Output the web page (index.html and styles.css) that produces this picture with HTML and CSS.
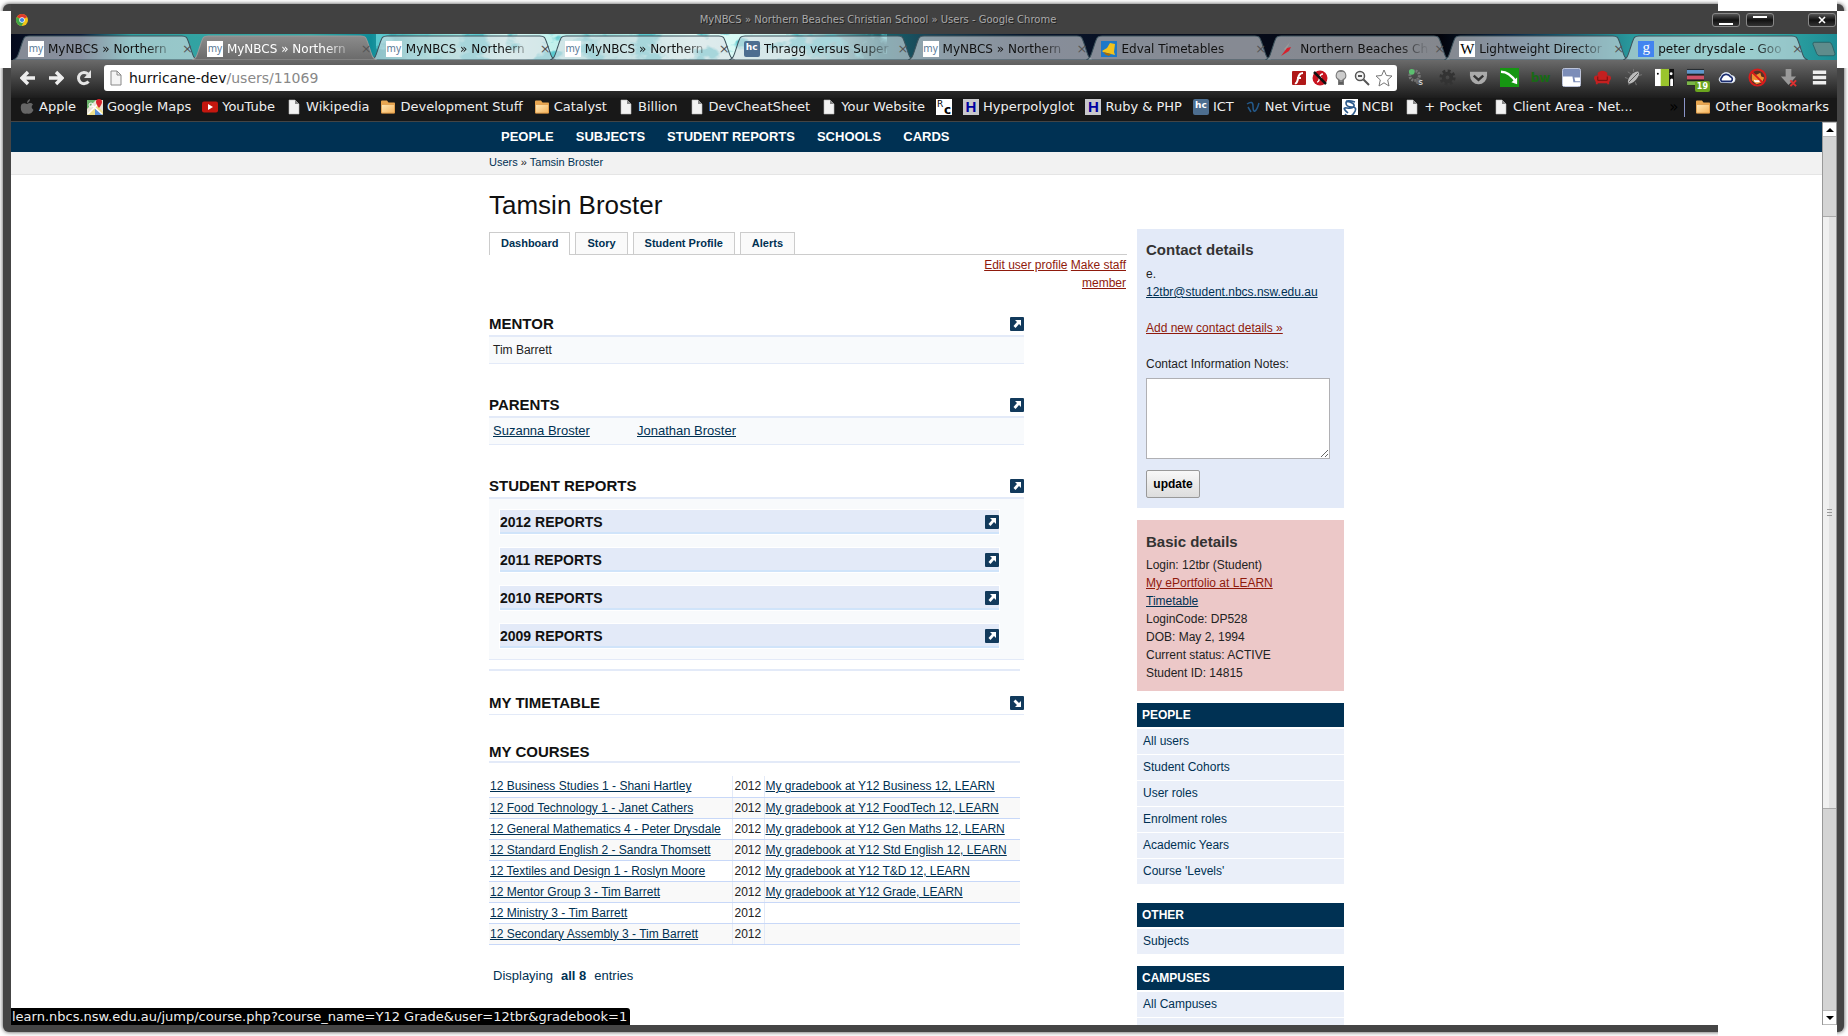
FILE: index.html
```html
<!DOCTYPE html>
<html lang="en">
<head>
<meta charset="utf-8">
<title>MyNBCS » Northern Beaches Christian School » Users</title>
<link rel="stylesheet" href="styles.css">
</head>
<body>
<svg class="defs" aria-hidden="true">
  <defs>
    <linearGradient id="folderFill" x1="0" y1="0" x2="1" y2="1"><stop offset="0" stop-color="#ffe9b8"/><stop offset="1" stop-color="#f5b35c"/></linearGradient>
    <linearGradient id="activeFill" x1="0" y1="0" x2="0" y2="1"><stop offset="0" stop-color="#8c8c8c"/><stop offset="1" stop-color="#6a6a6a"/></linearGradient>
    <filter id="marble" x="0" y="0" width="100%" height="100%"><feTurbulence type="fractalNoise" baseFrequency=".035 .06" numOctaves="4" seed="4"/><feColorMatrix values="0 0 0 0 .1  0 0 0 0 .58  0 0 0 0 .62  7 0 0 0 -3.500"/></filter>
    <symbol id="tab-shape" viewBox="0 0 184 25" preserveAspectRatio="none"><path d="M0 25C5 23 5 20 8 11C11 2 11 1 16 1H168C173 1 173 2 176 11C179 20 179 23 184 25Z"/></symbol>
    <symbol id="doc" viewBox="0 0 16 16"><path d="M3 1h6l4 4v10H3z" fill="#f2f2f2" stroke="#bbb" stroke-width=".6"/><path d="M9 1v4h4z" fill="#888"/></symbol>
    <symbol id="folder" viewBox="0 0 16 16"><path d="M1 2.500Q1 1.500 2 1.500h5l1.500 2h6Q15 3.500 15 5v8.500q0 1-1 1H2q-1 0-1-1z" fill="#e8a650"/><path d="M1.500 5.500h13v8.500h-13z" fill="url(#folderFill)" stroke="#d9913c" stroke-width=".6"/></symbol>
    <symbol id="collapse" viewBox="0 0 14 14"><rect width="14" height="14" rx="1" fill="#123a5c"/><path d="M5 3h6v6L9 7l-3.500 4-2-2L7 5z" fill="#fff"/></symbol>
    <symbol id="expand" viewBox="0 0 14 14"><rect width="14" height="14" rx="1" fill="#123a5c"/><path d="M5 11h6V5L9 7 5.500 3.500l-2 2L7 9z" fill="#fff"/></symbol>
  </defs>
</svg>

<div class="window">
  <header class="titlebar">
    <svg class="icon-12" viewBox="0 0 12 12"><circle cx="6" cy="6" r="6" fill="#f2c416"/><path d="M6 6L.8 3A6 6 0 0 1 11.200 3z" fill="#dd3a2c"/><path d="M6 6L.8 3A6 6 0 0 0 5.500 12L8 7.500z" fill="#3fa648"/><circle cx="6" cy="6" r="2.700" fill="#fff"/><circle cx="6" cy="6" r="2.100" fill="#3f83dd"/></svg>
    <span class="window-title">MyNBCS » Northern Beaches Christian School » Users - Google Chrome</span>
    <div class="window-buttons">
      <button aria-label="Minimise"><i class="min"></i></button>
      <button aria-label="Maximise"><i class="max"></i></button>
      <button class="close" aria-label="Close"><svg viewBox="0 0 8 8"><path d="M1 1l6 6M7 1L1 7" stroke="#fff" stroke-width="1.600"/></svg></button>
    </div>
  </header>

  <div class="tabstrip">
    <svg class="marble" aria-hidden="true"><rect width="100%" height="100%" filter="url(#marble)"/></svg>
    <button class="tab"><svg class="shape"><use href="#tab-shape"/></svg><span class="fav my">my</span><span class="label">MyNBCS » Northern</span><span class="x">×</span></button>
    <button class="tab active"><svg class="shape"><use href="#tab-shape"/></svg><span class="fav my">my</span><span class="label">MyNBCS » Northern</span><span class="x">×</span></button>
    <button class="tab"><svg class="shape"><use href="#tab-shape"/></svg><span class="fav my">my</span><span class="label">MyNBCS » Northern</span><span class="x">×</span></button>
    <button class="tab"><svg class="shape"><use href="#tab-shape"/></svg><span class="fav my">my</span><span class="label">MyNBCS » Northern</span><span class="x">×</span></button>
    <button class="tab"><svg class="shape"><use href="#tab-shape"/></svg><span class="fav hc">hc</span><span class="label">Thragg versus Super</span><span class="x">×</span></button>
    <button class="tab"><svg class="shape"><use href="#tab-shape"/></svg><span class="fav my">my</span><span class="label">MyNBCS » Northern</span><span class="x">×</span></button>
    <button class="tab"><svg class="shape"><use href="#tab-shape"/></svg><svg class="fav" viewBox="0 0 16 16"><path fill="#1d78c8" d="M0 0h16v16H0z"/><path d="M9 2l5 1-1 8 1 3-4-1-8-2-1-1 5-3z" fill="#f2c21c"/><path d="M2 11l8 2-2 2-3-1z" fill="#a86c08"/></svg><span class="label">Edval Timetables</span><span class="x">×</span></button>
    <button class="tab"><svg class="shape"><use href="#tab-shape"/></svg><svg class="fav" viewBox="0 0 16 16"><path d="M10 1L4 8l2 2z" fill="#999"/><path d="M11 6l-4 1-6 8 8-5z" fill="#d8202c"/></svg><span class="label">Northern Beaches Ch</span><span class="x">×</span></button>
    <button class="tab"><svg class="shape"><use href="#tab-shape"/></svg><span class="fav wiki">W</span><span class="label">Lightweight Director</span><span class="x">×</span></button>
    <button class="tab"><svg class="shape"><use href="#tab-shape"/></svg><span class="fav goog">g</span><span class="label">peter drysdale - Goo</span><span class="x">×</span></button>
    <button class="newtab" aria-label="New tab"><svg viewBox="0 0 26 16"><path d="M3 1h16q2 0 3 3l3 9q0 2-2 2H9q-2 0-3-2L2 3q0-2 1-2z" fill="#5f8c8c" stroke="#2a6468"/></svg></button>
  </div>

  <div class="toolbar">
    <button class="nav" aria-label="Back"><svg viewBox="0 0 16 16"><path d="M8 2L2 8l6 6M2 8h13" fill="none" stroke="#eee" stroke-width="3.400"/></svg></button>
    <button class="nav" aria-label="Forward"><svg viewBox="0 0 16 16"><path d="M8 2l6 6-6 6M14 8H1" fill="none" stroke="#eee" stroke-width="3.400"/></svg></button>
    <button class="nav" aria-label="Reload"><svg viewBox="0 0 16 16"><path d="M12.500 11.500A5.600 5.600 0 1 1 12 4" fill="none" stroke="#e4e4e4" stroke-width="3"/><path d="M15 0v8H8z" fill="#e4e4e4"/></svg></button>
    <div class="omnibox">
      <svg class="icon-16" viewBox="0 0 16 16"><path d="M3 1h6l4 4v10H3z" fill="#f4f4f4" stroke="#888"/><path d="M9 1v4h4" fill="none" stroke="#888"/></svg>
      <div class="url" role="textbox" aria-label="Address">hurricane-dev<span>/users/11069</span></div>
      <svg class="icon-16" viewBox="0 0 16 16"><rect x="1" y="1" width="14" height="14" rx="1" fill="#b01818"/><path d="M12 3Q8 3 7 8.500T4 13M6 8h4" fill="none" stroke="#fff" stroke-width="2"/></svg>
      <svg class="icon-16" viewBox="0 0 16 16"><circle cx="8" cy="8" r="7.500" fill="#c81420"/><path d="M11 4Q8 4 7.500 8T5 12M7 8h3" fill="none" stroke="#fff" stroke-width="1.500"/><path d="M2 2l12 12" stroke="#111" stroke-width="2.500"/></svg>
      <svg class="icon-16" viewBox="0 0 16 16"><path d="M8 0a5.500 5.500 0 0 1 3 10v5H5v-5A5.500 5.500 0 0 1 8 0z" fill="#777"/><path d="M8 2a3.500 3.500 0 0 1 1.500 7v3h-3V9A3.500 3.500 0 0 1 8 2z" fill="#ccc"/><path d="M6 11h4M6 13h4" stroke="#444"/></svg>
      <svg class="icon-16" viewBox="0 0 16 16"><circle cx="6" cy="6" r="4.500" fill="#f4f4f4" stroke="#555" stroke-width="1.500"/><path d="M4 6h4M9.500 9.500L15 15" stroke="#555" stroke-width="2"/></svg>
      <svg class="icon-18" viewBox="0 0 18 18"><path d="M9 1l2.400 5.500 5.600.5-4.300 3.900L14 17l-5-3.200L4 17l1.300-6.100L1 7l5.600-.5z" fill="#fff" stroke="#777"/></svg>
    </div>
    <div class="extensions">
      <button aria-label="Proxy"><svg viewBox="0 0 20 20"><circle cx="8" cy="8" r="5" fill="none" stroke="#777" stroke-width="3" stroke-dasharray="2 1"/><circle cx="12" cy="14" r="3" fill="#666"/><circle cx="5" cy="4" r="3" fill="#5cc070"/><text x="12" y="18" font-size="9" fill="#eee">s</text></svg></button>
      <button aria-label="Settings"><svg viewBox="0 0 20 20"><circle cx="10" cy="10" r="7" fill="none" stroke="#333" stroke-width="3" stroke-dasharray="3 2.500"/><circle cx="10" cy="10" r="4" fill="none" stroke="#333" stroke-width="4"/></svg></button>
      <button aria-label="Pocket"><svg viewBox="0 0 20 20"><path d="M1 2h18v6a9 9 0 0 1-18 0z" fill="#aaa"/><path d="M1 2h18v2H1z" fill="#555"/><path d="M5 8l5 4.500L15 8" fill="none" stroke="#333" stroke-width="2.500"/></svg></button>
      <button aria-label="Slider"><svg viewBox="0 0 20 20"><path d="M0 0h20v20H0z" fill="#169612"/><path d="M1 4q9 0 16 11" fill="none" stroke="#fff" stroke-width="2.500"/><path d="M18 10v7l-6-2z" fill="#fff"/></svg></button>
      <button aria-label="Builtwith"><span class="bw">bw</span></button>
      <button aria-label="Window"><svg viewBox="0 0 20 20"><rect x=".5" y=".5" width="19" height="19" rx="2" fill="#7c8db8" stroke="#c4cbe0"/><path d="M1 9h10l1 6h7v4H1zM13 10h6v4h-5z" fill="#fff"/></svg></button>
      <button aria-label="Couch"><svg viewBox="0 0 20 20"><path d="M5 8V5q5-4 10 0v3q4-1 4 3l-2 4v2h-2v-1H5v1H3v-2l-2-4q0-4 4-3z" fill="#c42020"/><path d="M5 9v4h10V9" fill="none" stroke="#701010"/></svg></button>
      <button aria-label="Bug"><svg viewBox="0 0 20 20"><path d="M1 10l3 1M4 4l3 2M10 1l0 3M19 7l-4 1M5 18l1-4M13 18l-1-3" stroke="#777"/><ellipse cx="10" cy="10" rx="3.500" ry="8" transform="rotate(42 10 10)" fill="#bbb"/><path d="M5 15L15 5" stroke="#555"/></svg></button>
      <button aria-label="Door"><svg viewBox="0 0 20 20"><path d="M0 1h7v18H0z" fill="#fff"/><path d="M6 1h9v18H6z" fill="#9ac42c"/><path d="M15 1h5v18h-5z" fill="#111"/><circle cx="3" cy="6" r="1"/><circle cx="17" cy="6" r="1.500" fill="#fff"/><path d="M16 12q2-2 3 0v7h-3z" fill="#fff"/></svg></button>
      <button aria-label="Stack"><svg viewBox="0 0 20 20"><path d="M1 1h18v18H1z" fill="#222"/><path d="M1 2h18v4H1z" fill="#5f97cc"/><path d="M1 8h18v4H1z" fill="#cf5068"/><path d="M1 14h18v4H1z" fill="#7ab648"/></svg><b class="badge">19</b></button>
      <button aria-label="Cloud"><svg viewBox="0 0 20 20"><path d="M4 15a3.500 3.500 0 0 1 0-6A6 6 0 0 1 15 8a3.800 3.800 0 0 1 1 7.500z" fill="#fff" stroke="#d8e4f4"/><path d="M5 14a2.500 2.500 0 0 1 0-4A5 5 0 0 1 14 9a2.800 2.800 0 0 1 1 5z" fill="#fff" stroke="#1b2d70" stroke-width="1.800"/></svg></button>
      <button aria-label="Blocker"><svg viewBox="0 0 20 20"><circle cx="10" cy="10" r="7" fill="#5a3020"/><path d="M4 6l5 1 4-2 1 4 3 1-2 5-6 2-5-4z" fill="#f09030"/><path d="M6 12q3 2 7 0l-1 3H7z" fill="#fff"/><circle cx="10" cy="10" r="8.500" fill="none" stroke="#d81c1c" stroke-width="2"/><path d="M4 4l12 12" stroke="#d81c1c" stroke-width="2"/></svg></button>
      <button aria-label="Downloads"><svg viewBox="0 0 20 20"><path d="M7 1h6v8h5l-8 9-8-9h5z" fill="#999"/><path d="M12 13l6 6M18 13l-6 6" stroke="#e03030" stroke-width="2"/></svg></button>
      <button aria-label="Menu"><svg viewBox="0 0 20 20"><path d="M3 4.500h14M3 10h14M3 15.500h14" stroke="#eee" stroke-width="3.500"/></svg></button>
    </div>
  </div>

  <nav class="bookmarks" aria-label="Bookmarks">
    <a href="#"><svg viewBox="0 0 16 16"><path d="M8 5Q12 3 14 5.500 11 8 14.500 11 12 16 8 14.500 4 16 2 11 1 5 4 4.500 6 4 8 5zM8 4q0-3 3-4 0 3-3 4z" fill="#666"/></svg>Apple</a>
    <a href="#"><svg viewBox="0 0 16 16"><path d="M0 1h16v15H0z" fill="#e9e4d4"/><path d="M0 1h9L0 10z" fill="#6bb36b"/><path d="M0 16L10 6l6 7v3z" fill="#efe08a"/><path d="M8 9l8 7h-8z" fill="#5a8fd8"/><path d="M1 15L13 3M6 7l9 8" stroke="#fff" stroke-width="1.500"/><circle cx="4" cy="6" r="2" fill="none" stroke="#fff"/><path d="M12 0a3 3 0 0 1 3 3q0 2-3 6-3-4-3-6a3 3 0 0 1 3-3z" fill="#d8262c"/></svg>Google Maps</a>
    <a href="#"><svg viewBox="0 0 16 16"><rect y="2.500" width="16" height="11" rx="2" fill="#c4170f"/><path d="M6 5l5 3-5 3z" fill="#fff"/></svg>YouTube</a>
    <a href="#"><svg><use href="#doc"/></svg>Wikipedia</a>
    <a href="#"><svg><use href="#folder"/></svg>Development Stuff</a>
    <a href="#"><svg><use href="#folder"/></svg>Catalyst</a>
    <a href="#"><svg><use href="#doc"/></svg>Billion</a>
    <a href="#"><svg><use href="#doc"/></svg>DevCheatSheet</a>
    <a href="#"><svg><use href="#doc"/></svg>Your Website</a>
    <a href="#" aria-label="Rosetta Code"><svg viewBox="0 0 16 16"><path fill="#fff" d="M0 0h16v16H0z"/><text x="1" y="8" font-size="9">R</text><text x="8" y="15" font-size="12" font-weight="bold">c</text></svg></a>
    <a href="#"><span class="fav h">H</span>Hyperpolyglot</a>
    <a href="#"><span class="fav h">H</span>Ruby &amp; PHP</a>
    <a href="#"><span class="fav hc">hc</span>ICT</a>
    <a href="#"><svg viewBox="0 0 16 16"><path d="M2 5q6-4 6 2 0 6 2 5 2-1 4-8M3 8l3 5" fill="none" stroke="#245a8c" stroke-width="1.500"/></svg>Net Virtue</a>
    <a href="#"><svg viewBox="0 0 16 16"><path fill="#fff" d="M0 0h16v16H0z"/><path d="M13 3Q4 0 4 4t6 4 2 6-9 1M4 2q9 2 8 5T5 9t1 5" fill="none" stroke="#2c5a8c" stroke-width="1.600"/></svg>NCBI</a>
    <a href="#"><svg><use href="#doc"/></svg>+ Pocket</a>
    <a href="#"><svg><use href="#doc"/></svg>Client Area - Net...</a>
    <span class="more">»</span>
    <a href="#" class="other"><svg><use href="#folder"/></svg>Other Bookmarks</a>
  </nav>

  <div class="viewport">
    <div class="page">
      <nav class="sitenav"><div class="wrap">
        <a href="#">PEOPLE</a><a href="#">SUBJECTS</a><a href="#">STUDENT REPORTS</a><a href="#">SCHOOLS</a><a href="#">CARDS</a>
      </div></nav>
      <div class="crumbs"><div class="wrap"><a href="#">Users</a> » <a href="#">Tamsin Broster</a></div></div>

      <div class="wrap columns">
        <main>
          <h1>Tamsin Broster</h1>
          <div class="usertabs"><a href="#" class="current">Dashboard</a><a href="#">Story</a><a href="#">Student Profile</a><a href="#">Alerts</a></div>
          <div class="actions"><a href="#">Edit user profile</a> <a href="#">Make staff member</a></div>

          <section class="block">
            <h2>MENTOR<svg><use href="#collapse"/></svg></h2>
            <div class="body people"><span>Tim Barrett</span></div>
          </section>
          <section class="block">
            <h2>PARENTS<svg><use href="#collapse"/></svg></h2>
            <div class="body people"><a href="#">Suzanna Broster</a><a href="#">Jonathan Broster</a></div>
          </section>
          <section class="block reports">
            <h2>STUDENT REPORTS<svg><use href="#collapse"/></svg></h2>
            <div class="body">
              <h3>2012 REPORTS<svg><use href="#collapse"/></svg></h3>
              <h3>2011 REPORTS<svg><use href="#collapse"/></svg></h3>
              <h3>2010 REPORTS<svg><use href="#collapse"/></svg></h3>
              <h3>2009 REPORTS<svg><use href="#collapse"/></svg></h3>
            </div>
          </section>
          <hr>
          <section class="block timetable"><h2>MY TIMETABLE<svg><use href="#expand"/></svg></h2></section>
          <section class="courses">
            <h2>MY COURSES</h2>
            <table>
              <tr><td><a href="#">12 Business Studies 1 - Shani Hartley</a></td><td>2012</td><td><a href="#">My gradebook at Y12 Business 12, LEARN</a></td></tr>
              <tr><td><a href="#">12 Food Technology 1 - Janet Cathers</a></td><td>2012</td><td><a href="#">My gradebook at Y12 FoodTech 12, LEARN</a></td></tr>
              <tr><td><a href="#">12 General Mathematics 4 - Peter Drysdale</a></td><td>2012</td><td><a href="#">My gradebook at Y12 Gen Maths 12, LEARN</a></td></tr>
              <tr><td><a href="#">12 Standard English 2 - Sandra Thomsett</a></td><td>2012</td><td><a href="#">My gradebook at Y12 Std English 12, LEARN</a></td></tr>
              <tr><td><a href="#">12 Textiles and Design 1 - Roslyn Moore</a></td><td>2012</td><td><a href="#">My gradebook at Y12 T&amp;D 12, LEARN</a></td></tr>
              <tr><td><a href="#">12 Mentor Group 3 - Tim Barrett</a></td><td>2012</td><td><a href="#">My gradebook at Y12 Grade, LEARN</a></td></tr>
              <tr><td><a href="#">12 Ministry 3 - Tim Barrett</a></td><td>2012</td><td></td></tr>
              <tr><td><a href="#">12 Secondary Assembly 3 - Tim Barrett</a></td><td>2012</td><td></td></tr>
            </table>
            <p class="count"><span>Displaying</span><b>all 8</b><span>entries</span></p>
          </section>
        </main>

        <aside>
          <form class="card contact">
            <h4>Contact details</h4>
            <p>e.<br><a href="#">12tbr@student.nbcs.nsw.edu.au</a></p>
            <p><a href="#" class="red">Add new contact details »</a></p>
            <label for="notes">Contact Information Notes:</label>
            <textarea id="notes"></textarea>
            <button type="button">update</button>
          </form>
          <div class="card basic">
            <h4>Basic details</h4>
            <p>Login: 12tbr (Student)<br><a href="#" class="red">My ePortfolio at LEARN</a><br><a href="#">Timetable</a><br>LoginCode: DP528<br>DOB: May 2, 1994<br>Current status: ACTIVE<br>Student ID: 14815</p>
          </div>
          <div class="menu people-menu"><h5>PEOPLE</h5><a href="#">All users</a><a href="#">Student Cohorts</a><a href="#">User roles</a><a href="#">Enrolment roles</a><a href="#">Academic Years</a><a href="#">Course 'Levels'</a></div>
          <div class="menu"><h5>OTHER</h5><a href="#">Subjects</a></div>
          <div class="menu"><h5>CAMPUSES</h5><a href="#">All Campuses</a><a href="#"></a></div>
        </aside>
      </div>
    </div>
    <div class="scrollbar">
      <button aria-label="Scroll up"><svg viewBox="0 0 8 4"><path d="M0 4l4-4 4 4z"/></svg></button>
      <div class="track"><div class="thumb"><i></i></div></div>
      <button aria-label="Scroll down"><svg viewBox="0 0 8 4"><path d="M0 0l4 4 4-4z"/></svg></button>
    </div>
    <div class="status">learn.nbcs.nsw.edu.au/jump/course.php?course_name=Y12 Grade&amp;user=12tbr&amp;gradebook=1</div>
  </div>
</div>
<i class="gap left"></i><i class="gap right"></i><i class="gap top"></i><i class="gap bottom"></i>
</body>
</html>
```
FILE: styles.css
```css
* { box-sizing: border-box; }
body { margin: 0; background: #fff; font: 12px/18px "Liberation Sans", Arial, sans-serif; color: #222; overflow: hidden; }
button { font: inherit; margin: 0; padding: 0; border: 0; background: none; color: inherit; }
h1, h2, h3, h4, h5, p { margin: 0; }
.defs { position: absolute; width: 0; height: 0; }

/* window frame */
.window { display: flex; flex-direction: column; height: calc(100vh - 8px); margin: 4px 4px 4px 3px; padding: 0 7px 7px 8px; background: #454545; border-radius: 6px; box-shadow: 0 0 4px #444; font-family: "DejaVu Sans", sans-serif; }
.gap { position: absolute; background: #fff; }
.gap.left { left: 0; top: 11px; width: 11px; height: 57px; }
.gap.right { right: 0; top: 11px; width: 11px; height: 57px; }
.gap.top { right: 11px; top: 0; width: 119px; height: 11px; }
.gap.bottom { right: 11px; bottom: 0; width: 119px; height: 11px; }

.titlebar { display: flex; align-items: center; height: 30px; flex: none; padding: 2px 1px 0 5px; background: #414141; }
.icon-12 { width: 12px; height: 12px; }
.window-title { flex: 1; text-align: center; padding-left: 16px; font-size: 10px; color: #aaa; text-shadow: 1px 1px #222; }
.window-buttons { display: flex; gap: 6px; }
.window-buttons button { width: 28px; height: 14px; border: 1px solid #888; border-radius: 3px; background: linear-gradient(#555, #111 50%, #333); display: flex; justify-content: center; align-items: center; }
.window-buttons .close { margin-left: 28px; }
.window-buttons svg { width: 8px; height: 8px; }
.window-buttons i { width: 14px; height: 2px; background: #fff; }
.window-buttons .min { margin-top: 7px; }
.window-buttons .max { margin-bottom: 7px; }

/* tab strip over the theme picture */
.tabstrip { position: relative; display: flex; height: 26px; flex: none; padding: 1px 0 0 2px; color: #111;
  background: linear-gradient(90deg, #050a1c 0, #0b1c3c 70px, #2fa0a0 120px, #38a8a6 300px, #0f8c98 360px, #6fd0cc 410px, #d8faf6 500px, #a4e4e0 600px, #e4fffa 680px, #c8f2ee 780px, #15646e 870px, #1a4254 920px, #08142a 1020px, #060c1c 1200px, #02040c 1430px, #0c2a4a 1500px, #28989c 1620px, #3fb8b0 1720px, #1c8c94); }
.marble { position: absolute; left: 20%; top: 0; width: 28%; height: 26px; }
.tab { position: relative; display: flex; align-items: center; flex: 1 1 0; min-width: 0; gap: 4px; padding: 2px 0 0 15px; text-align: left; font-size: 12px; }
.tab .shape { position: absolute; left: 0; top: 0; width: calc(100% + 6px); height: 25px; fill: #dcdfe499; stroke: #3c525c; stroke-width: 1px; }
.tab.active { z-index: 1; color: #fff; }
.tab.active .shape { fill: url(#activeFill); stroke: #999; }
.fav { position: relative; flex: none; width: 16px; height: 16px; line-height: 16px; text-align: center; white-space: nowrap; }
.fav.my { background: #fff; color: #5a7a98; font: 10px/14px "Noto Sans", sans-serif; }
.fav.hc { background: #4d6e90; color: #fff; border-radius: 2px; font: bold 9px/13px "DejaVu Sans", sans-serif; }
.fav.wiki { background: #fff; color: #000; font: 15px/16px "Liberation Serif", serif; }
.fav.goog { background: #4284f0; color: #fff; font: 15px/13px "Liberation Serif", serif; }
.fav.h { background: #c8c8cc; color: #0000a0; font: bold 15px/16px "Liberation Sans", sans-serif; }
.tab .label { position: relative; flex: 1; min-width: 0; white-space: nowrap; mask-image: linear-gradient(90deg, #000 75%, transparent); }
.tab .x { position: relative; width: 10px; text-align: center; font-size: 13px; color: #555; }
.newtab { position: relative; width: 27px; margin-left: 8px; padding: 3px 1px 0; }
.newtab svg { display: block; width: 25px; height: 16px; }

.toolbar { display: flex; align-items: center; height: 38px; flex: none; padding: 0 2px 3px 9px; background: linear-gradient(#6a6a6a, #1c1c1c); }
.nav { width: 28px; height: 16px; }
.nav svg { display: block; width: 16px; height: 16px; }
.omnibox { display: flex; align-items: center; gap: 5px; flex: 1; height: 26px; margin-right: 4px; padding: 0 4px; background: #fff; border-radius: 3px; color: #111; }
.icon-16 { width: 16px; height: 16px; }
.icon-18 { width: 18px; height: 18px; }
.url { flex: 1; font-size: 14px; }
.url span { color: #888; }
.extensions { display: flex; }
.extensions button { position: relative; width: 31px; height: 20px; display: flex; justify-content: center; }
.extensions svg { width: 19px; height: 19px; }
.bw { font: bold 12px/20px "DejaVu Sans", sans-serif; color: #176a14; }
.badge { position: absolute; right: 1px; bottom: -4px; padding: 0 2px; border-radius: 2px; background: #6ba51e; color: #fff; font-size: 8px; line-height: 11px; }

.bookmarks { display: flex; align-items: center; gap: 11px; height: 24px; flex: none; padding: 0 8px 5px; background: #181818; border-bottom: 1px solid #444; color: #eee; font-size: 13px; white-space: nowrap; }
.bookmarks a { display: flex; align-items: center; gap: 4px; color: inherit; text-decoration: none; }
.bookmarks a svg { width: 16px; height: 16px; flex: none; }
.more { margin-left: auto; color: #000; font-size: 15px; }
.bookmarks .other { border-left: 1px solid #8a94c8; padding-left: 10px; margin-left: -5px; height: 19px; }

/* page area */
.viewport { position: relative; display: flex; flex: 1; min-height: 0; background: #fff; }
.page { flex: 1; overflow: hidden; font-family: "Liberation Sans", Arial, sans-serif; }
.page a { color: #003153; }
.page a.red, .page .actions a { color: #8f1a0c; }
.wrap { width: 855px; max-width: 100%; margin: 0 auto; }
.sitenav { background: #003153; }
.sitenav .wrap { display: flex; gap: 22px; padding: 6px 12px; font-size: 13px; font-weight: bold; }
.page .sitenav a { color: #fff; text-decoration: none; }
.crumbs { height: 23px; background: #f2f2f2; border-bottom: 1px solid #e5e5e5; font-size: 11px; line-height: 20px; }
.crumbs a { text-decoration: none; }
.columns { display: flex; gap: 10px; align-items: flex-start; }
main { flex: 1; min-width: 0; }
aside { width: 207px; padding-top: 54px; }
h1 { padding: 15px 0 12px; font-size: 26px; line-height: 30px; font-weight: normal; color: #111; }
.usertabs { display: flex; gap: 5px; height: 23px; border-bottom: 1px solid #ccc; }
.usertabs a { height: 22px; padding: 0 11px; border: 1px solid #ccc; border-bottom: 0; background: #fafafa; font-size: 11px; line-height: 20px; font-weight: bold; text-decoration: none; }
.usertabs .current { height: 23px; background: #fff; }
.actions { width: 150px; margin-left: auto; padding: 1px 1px 0 0; text-align: right; }

.block { width: 535px; max-width: 100%; margin-bottom: 32px; }
.actions + .block { margin-top: 23px; }
h2 { display: flex; justify-content: space-between; align-items: center; height: 22px; padding-bottom: 2px; border-bottom: 2px solid #e3eaf8; font-size: 15px; color: #111; }
h2 svg, h3 svg { width: 14px; height: 14px; }
.body { background: #f8fafc; border-bottom: 1px solid #e3eaf8; }
.people { display: grid; grid-template-columns: 144px 1fr; padding: 4px; }
.people a { font-size: 13px; }
.reports { margin-bottom: 9px; }
.reports .body { display: grid; gap: 12px; padding: 10px 24px 10px 10px; }
h3 { display: flex; justify-content: space-between; align-items: center; height: 26px; border: 1px solid #fff; box-shadow: inset 0 -2px #d0e4fa; background: #e3eaf8; font-size: 14px; color: #111; }
hr { width: 531px; height: 2px; margin: 0; border: 0; background: #e3eaf8; }
.timetable { margin: 22px 0 28px; }
.timetable h2 { border-width: 1px; }
.courses { width: 531px; max-width: 100%; }
.courses h2 { height: 20px; padding: 0; }
table { width: 100%; margin-top: 13px; border-collapse: collapse; }
td { height: 21px; padding: 0 1px; border-bottom: 1px solid #c8d8f8; line-height: 18px; }
td:nth-child(2) { width: 32px; padding-left: 2px; border-left: 1px solid #e3eaf8; border-right: 1px solid #e3eaf8; }
td:first-child { width: 243px; }
tr:nth-child(even) { background: #f9f9f9; }
.count { display: flex; gap: 8px; padding: 22px 4px; color: #003153; font-size: 13px; }

.card { padding: 12px 9px; margin-bottom: 12px; }
.contact { background: #e3eaf8; padding-bottom: 10px; }
.basic { background: #ecc8c8; padding: 13px 9px 9px; }
h4 { padding-bottom: 6px; font-size: 15px; line-height: 18px; color: #333; }
.basic h4 { padding-bottom: 5px; }
.card p { margin-bottom: 18px; }
.basic p { margin: 0; }
label { display: block; }
textarea { display: block; width: 184px; height: 81px; margin: 5px 0 11px; border: 1px solid #b0b0b4; background: #fff; }
.card button { width: 54px; height: 28px; border: 1px solid #999; border-radius: 2px; background: linear-gradient(#f8f8f8, #ddd); font-weight: bold; color: #000; }
.menu { margin-bottom: 12px; }
.people-menu { margin-bottom: 19px; }
h5 { height: 24px; margin-bottom: 2px; padding-left: 5px; background: #003153; color: #fff; font-size: 12px; line-height: 24px; }
.menu a { display: block; height: 25px; margin-top: 1px; padding-left: 6px; background: #eaeff9; line-height: 25px; text-decoration: none; }
h5 + a:first-of-type { margin-top: 0; }

.scrollbar { display: flex; flex-direction: column; width: 15px; border: 1px solid #999; border-width: 0 1px; background: #d4d4d4; }
.scrollbar button { height: 15px; background: #fff; border: 1px solid #bbb; border-width: 1px 0; display: flex; justify-content: center; align-items: center; }
.scrollbar svg { width: 8px; height: 4px; }
.track { flex: 1; display: grid; grid-template-rows: 9fr 68fr 23fr; }
.thumb { grid-row: 2; border: 1px solid #aaa; border-width: 1px 0; background: linear-gradient(90deg, #f0f0f0 50%, #e2e2e2 50%); display: grid; place-items: center; }
.thumb i { width: 5px; height: 7px; background: repeating-linear-gradient(#999 0 1px, transparent 1px 3px); }
.status { position: absolute; left: 0; bottom: 0; padding: 0 3px 0 1px; border-radius: 0 3px 0 0; background: #000; color: #eee; font-size: 13px; line-height: 17px; }
```
